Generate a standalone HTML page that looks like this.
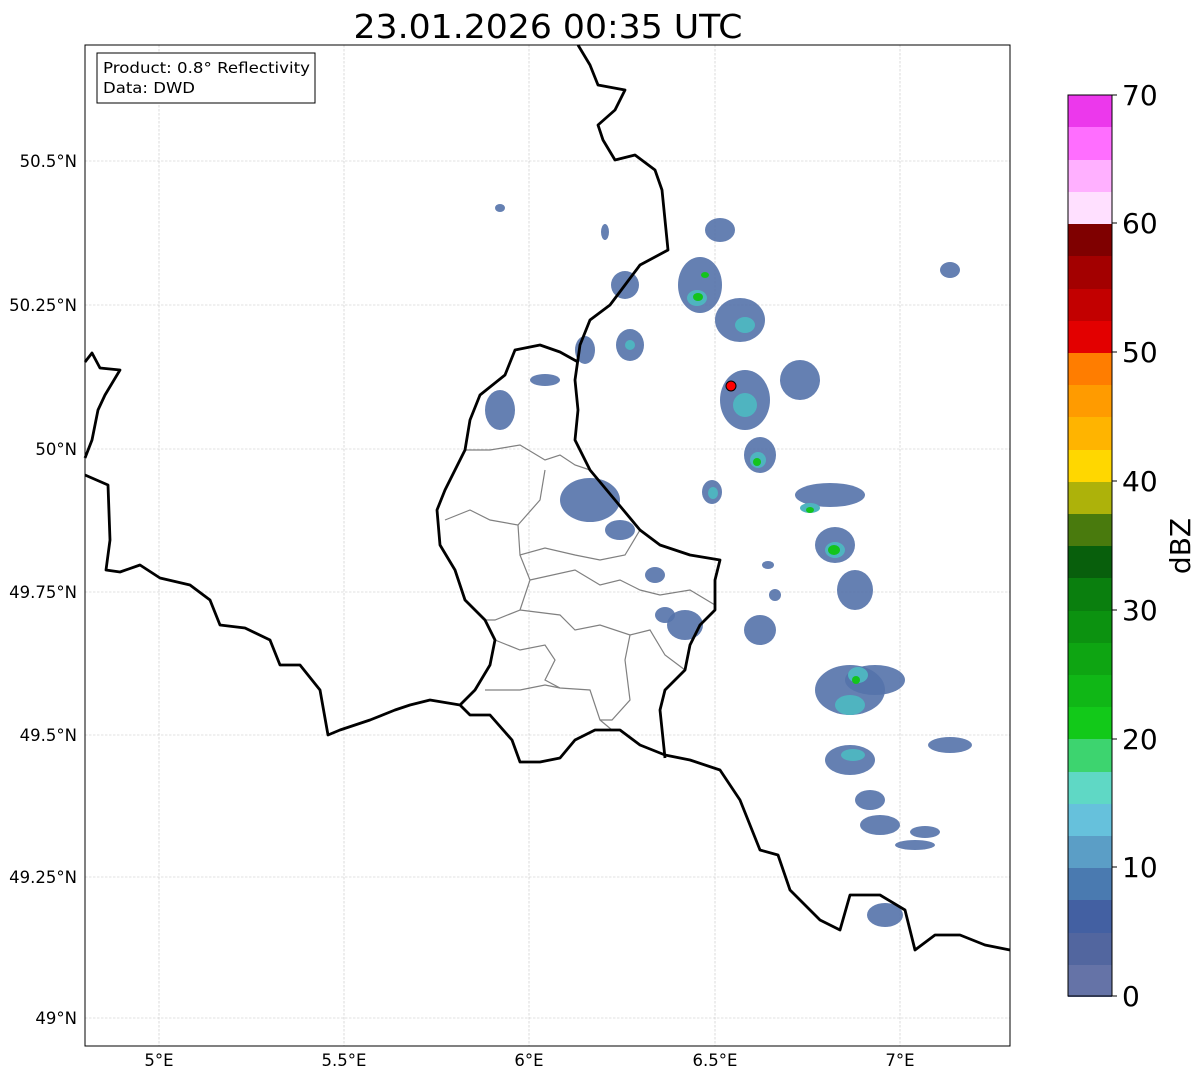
<!DOCTYPE html>
<html><head><meta charset="utf-8"><style>
html,body{margin:0;padding:0;background:#fff;}
svg{display:block;font-family:"DejaVu Sans","Liberation Sans",sans-serif;}
</style></head><body>
<svg width="1202" height="1081" viewBox="0 0 1202 1081" xmlns="http://www.w3.org/2000/svg">
<rect width="1202" height="1081" fill="#fff"/>
<text x="548" y="38" font-size="33" text-anchor="middle" fill="#000" textLength="389" lengthAdjust="spacingAndGlyphs">23.01.2026 00:35 UTC</text>
<g stroke="#c4c4c4" stroke-width="0.6" stroke-dasharray="2.5,1.5">
<line x1="159" y1="45" x2="159" y2="1046"/><line x1="344" y1="45" x2="344" y2="1046"/><line x1="529" y1="45" x2="529" y2="1046"/><line x1="715" y1="45" x2="715" y2="1046"/><line x1="900" y1="45" x2="900" y2="1046"/>
<line x1="85" y1="161" x2="1010" y2="161"/><line x1="85" y1="305" x2="1010" y2="305"/><line x1="85" y1="449" x2="1010" y2="449"/><line x1="85" y1="592" x2="1010" y2="592"/><line x1="85" y1="735" x2="1010" y2="735"/><line x1="85" y1="877" x2="1010" y2="877"/><line x1="85" y1="1018" x2="1010" y2="1018"/>
</g>
<g fill="#5472aa" fill-opacity="0.9">
<ellipse cx="625" cy="285" rx="14" ry="14"/><ellipse cx="700" cy="285" rx="22" ry="28"/><ellipse cx="720" cy="230" rx="15" ry="12"/><ellipse cx="740" cy="320" rx="25" ry="22"/>
<ellipse cx="630" cy="345" rx="14" ry="16"/><ellipse cx="585" cy="350" rx="10" ry="14"/><ellipse cx="500" cy="410" rx="15" ry="20"/><ellipse cx="545" cy="380" rx="15" ry="6"/>
<ellipse cx="745" cy="400" rx="25" ry="30"/><ellipse cx="800" cy="380" rx="20" ry="20"/><ellipse cx="760" cy="455" rx="16" ry="18"/><ellipse cx="712" cy="492" rx="10" ry="12"/>
<ellipse cx="590" cy="500" rx="30" ry="22"/><ellipse cx="620" cy="530" rx="15" ry="10"/><ellipse cx="655" cy="575" rx="10" ry="8"/><ellipse cx="685" cy="625" rx="18" ry="15"/><ellipse cx="665" cy="615" rx="10" ry="8"/>
<ellipse cx="830" cy="495" rx="35" ry="12"/><ellipse cx="835" cy="545" rx="20" ry="18"/><ellipse cx="855" cy="590" rx="18" ry="20"/><ellipse cx="760" cy="630" rx="16" ry="15"/>
<ellipse cx="850" cy="690" rx="35" ry="25"/><ellipse cx="875" cy="680" rx="30" ry="15"/><ellipse cx="850" cy="760" rx="25" ry="15"/><ellipse cx="870" cy="800" rx="15" ry="10"/>
<ellipse cx="880" cy="825" rx="20" ry="10"/><ellipse cx="950" cy="745" rx="22" ry="8"/><ellipse cx="925" cy="832" rx="15" ry="6"/><ellipse cx="915" cy="845" rx="20" ry="5"/>
<ellipse cx="885" cy="915" rx="18" ry="12"/><ellipse cx="950" cy="270" rx="10" ry="8"/><ellipse cx="605" cy="232" rx="4" ry="8"/><ellipse cx="500" cy="208" rx="5" ry="4"/><ellipse cx="775" cy="595" rx="6" ry="6"/><ellipse cx="768" cy="565" rx="6" ry="4"/>
</g>
<g fill="#4fb4c0">
<ellipse cx="697" cy="298" rx="10" ry="8"/><ellipse cx="745" cy="325" rx="10" ry="8"/><ellipse cx="745" cy="405" rx="12" ry="12"/><ellipse cx="758" cy="460" rx="8" ry="8"/><ellipse cx="713" cy="493" rx="5" ry="6"/>
<ellipse cx="835" cy="550" rx="10" ry="8"/><ellipse cx="850" cy="705" rx="15" ry="10"/><ellipse cx="858" cy="675" rx="10" ry="8"/><ellipse cx="853" cy="755" rx="12" ry="6"/><ellipse cx="810" cy="508" rx="10" ry="5"/><ellipse cx="630" cy="345" rx="5" ry="5"/>
</g>
<g fill="#14c41c">
<ellipse cx="698" cy="297" rx="5" ry="4"/><ellipse cx="757" cy="462" rx="4" ry="4"/><ellipse cx="834" cy="550" rx="6" ry="5"/><ellipse cx="856" cy="680" rx="4" ry="4"/><ellipse cx="705" cy="275" rx="4" ry="3"/><ellipse cx="810" cy="510" rx="4" ry="3"/>
</g>
<g fill="none" stroke="#808080" stroke-width="1.2">
<polyline points="465,450 490,450 520,445 545,460 560,455 575,465 590,470"/>
<polyline points="445,520 470,510 490,520 518,525 520,555 545,548 575,555 600,560 625,555 640,530"/>
<polyline points="520,555 530,580 520,610 495,620 485,620"/>
<polyline points="530,580 575,570 600,585 620,580 640,590 660,595 690,590 715,605"/>
<polyline points="520,610 560,615 575,630 600,625 630,635 650,630 665,655 685,670"/>
<polyline points="495,640 520,650 545,645 555,660 545,680 560,688 590,690 600,720 612,730"/>
<polyline points="485,690 520,690 545,685 560,688"/>
<polyline points="630,635 625,660 630,700 612,720 600,720"/>
<polyline points="545,470 540,500 518,525"/>
</g>
<g fill="none" stroke="#000" stroke-width="2.8" stroke-linejoin="round">
<polyline points="85,475 108,485 110,540 106,570 120,572 140,565 160,578 190,585 210,600 220,625 245,628 270,640 280,665 300,665 320,690 328,735 340,730 370,720 395,710 410,705 430,700 460,705 470,715 490,715 512,740 520,762 540,762 560,758 575,740 595,730 620,730 640,745 665,755 690,760 720,770 740,800 748,820 760,850 778,855 790,890 800,900 820,920 840,930 850,895 880,895 905,910 915,950 935,935 960,935 985,945 1010,950"/>
<polyline points="85,362 92,353 100,368 120,370 105,395 98,410 92,440 85,458"/>
<polyline points="578,45 590,65 598,85 625,90 615,110 598,125 603,140 615,160 635,155 655,170 662,190 665,220 668,250 640,265 625,285 610,305 590,320 580,345 575,380 578,410 575,440 590,470 615,500 640,530 660,545 690,555 720,560 715,580 715,610 700,625 690,645 685,670 665,690 660,710 665,758"/>
<polyline points="578,362 560,352 540,345 515,350 505,375 480,395 470,420 465,450 455,470 445,490 437,510 440,545 455,570 465,600 485,620 495,640 490,665 475,690 460,705"/>
</g>
<circle cx="731" cy="386" r="5" fill="#f00" stroke="#000" stroke-width="1"/>
<rect x="85" y="45" width="925" height="1001" fill="none" stroke="#000" stroke-width="1"/>
<rect x="97" y="53" width="218" height="50" fill="#fff" stroke="#000" stroke-width="1"/>
<text x="103" y="73" font-size="15" textLength="207" lengthAdjust="spacingAndGlyphs">Product: 0.8° Reflectivity</text>
<text x="103" y="93" font-size="15" textLength="92" lengthAdjust="spacingAndGlyphs">Data: DWD</text>
<g font-size="16.5" text-anchor="end">
<text x="77" y="167">50.5°N</text><text x="77" y="311">50.25°N</text><text x="77" y="455">50°N</text><text x="77" y="598">49.75°N</text><text x="77" y="741">49.5°N</text><text x="77" y="883">49.25°N</text><text x="77" y="1024">49°N</text>
</g>
<g font-size="16.5" text-anchor="middle">
<text x="159" y="1066">5°E</text><text x="344" y="1066">5.5°E</text><text x="529" y="1066">6°E</text><text x="715" y="1066">6.5°E</text><text x="900" y="1066">7°E</text>
</g>
<g>
<rect x="1068" y="964" width="44" height="33" fill="#6573a7"/>
<rect x="1068" y="932" width="44" height="33" fill="#52669f"/>
<rect x="1068" y="900" width="44" height="33" fill="#4360a2"/>
<rect x="1068" y="867" width="44" height="33" fill="#4a7ab0"/>
<rect x="1068" y="835" width="44" height="33" fill="#5b9ec6"/>
<rect x="1068" y="803" width="44" height="33" fill="#66c1dc"/>
<rect x="1068" y="771" width="44" height="33" fill="#5fd8c5"/>
<rect x="1068" y="739" width="44" height="33" fill="#3dd46f"/>
<rect x="1068" y="706" width="44" height="33" fill="#12c919"/>
<rect x="1068" y="674" width="44" height="33" fill="#10b716"/>
<rect x="1068" y="642" width="44" height="33" fill="#0ea512"/>
<rect x="1068" y="610" width="44" height="33" fill="#0c9210"/>
<rect x="1068" y="578" width="44" height="33" fill="#0a7f0e"/>
<rect x="1068" y="545" width="44" height="33" fill="#085f0c"/>
<rect x="1068" y="513" width="44" height="33" fill="#497a0d"/>
<rect x="1068" y="481" width="44" height="33" fill="#adb20a"/>
<rect x="1068" y="449" width="44" height="33" fill="#ffd700"/>
<rect x="1068" y="417" width="44" height="33" fill="#ffb400"/>
<rect x="1068" y="384" width="44" height="33" fill="#ff9b00"/>
<rect x="1068" y="352" width="44" height="33" fill="#ff7d00"/>
<rect x="1068" y="320" width="44" height="33" fill="#e30000"/>
<rect x="1068" y="288" width="44" height="33" fill="#c20000"/>
<rect x="1068" y="256" width="44" height="33" fill="#a30000"/>
<rect x="1068" y="223" width="44" height="33" fill="#7f0000"/>
<rect x="1068" y="191" width="44" height="33" fill="#ffe0ff"/>
<rect x="1068" y="159" width="44" height="33" fill="#ffb0ff"/>
<rect x="1068" y="127" width="44" height="33" fill="#ff6eff"/>
<rect x="1068" y="95" width="44" height="32" fill="#ec38ec"/>
<rect x="1068" y="95" width="44" height="901" fill="none" stroke="#000" stroke-width="1"/>
</g>
<g stroke="#000" stroke-width="1">
<line x1="1112" y1="996" x2="1117" y2="996"/><line x1="1112" y1="867" x2="1117" y2="867"/><line x1="1112" y1="739" x2="1117" y2="739"/><line x1="1112" y1="610" x2="1117" y2="610"/><line x1="1112" y1="481" x2="1117" y2="481"/><line x1="1112" y1="352" x2="1117" y2="352"/><line x1="1112" y1="223" x2="1117" y2="223"/><line x1="1112" y1="95" x2="1117" y2="95"/>
</g>
<g font-size="28">
<text x="1122" y="1006">0</text><text x="1122" y="877">10</text><text x="1122" y="749">20</text><text x="1122" y="620">30</text><text x="1122" y="491">40</text><text x="1122" y="362">50</text><text x="1122" y="233">60</text><text x="1122" y="105">70</text>
</g>
<text transform="translate(1190,546) rotate(-90)" font-size="28" text-anchor="middle">dBZ</text>
</svg>
</body></html>
